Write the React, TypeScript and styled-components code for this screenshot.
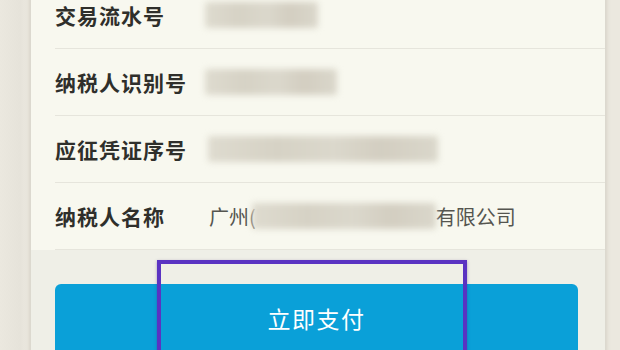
import styled, { createGlobalStyle } from 'styled-components'

const GlobalStyle = createGlobalStyle`
  html, body {
    margin: 0;
    padding: 0;
    background: #ebe8df;
    overflow: hidden;
  }
  body {
    font-family: "Noto Sans CJK SC", "Noto Sans", sans-serif;
  }
`

type Info = {
  label: string
  prefix?: string
  blurWidth: number
  blurOffset?: number
  suffix?: string
}

const rows: Info[] = [
  { label: '交易流水号', blurWidth: 113 },
  { label: '纳税人识别号', blurWidth: 132 },
  { label: '应征凭证序号', blurWidth: 230, blurOffset: 3 },
  { label: '纳税人名称', prefix: '广州(', blurWidth: 184, blurOffset: -4, suffix: '有限公司' },
]

const App = () => {
  return (
    <Root>
      <GlobalStyle />
      <Page>
        <Card>
          {rows.map((r) => (
            <Row key={r.label}>
              <Label>{r.label}</Label>
              <Value>
                {r.prefix && <Plain lead>{r.prefix}</Plain>}
                <Blurred w={r.blurWidth} offset={r.blurOffset || 0} />
                {r.suffix && <Plain>{r.suffix}</Plain>}
              </Value>
            </Row>
          ))}
          <Footer>
            <PayBtn>立即支付</PayBtn>
            <Highlight />
            <Watermark />
          </Footer>
        </Card>
      </Page>
    </Root>
  )
}

export default App

const Root = styled.div`
  width: 620px;
  height: 350px;
  overflow: hidden;
  background: linear-gradient(90deg, #ebe8df 0, #e6e3da 20px, #ebe8df 28px);
`

const Page = styled.div`
  padding: 0 14px 0 30px;
`

const Card = styled.div`
  margin-top: -18px;
  background: #f8f8ef;
  border-left: 1px solid #dcd9cf;
  border-right: 1px solid #dcd9cf;
  box-shadow: 0 0 4px rgba(120, 110, 90, 0.25);
`

const Row = styled.div`
  display: flex;
  align-items: center;
  height: 66px;
  margin-left: 24px;
  border-bottom: 1px solid #e6e5dc;
`

const Label = styled.div`
  width: 150px;
  flex-shrink: 0;
  font-size: 21px;
  font-weight: bold;
  letter-spacing: 1px;
  color: #2f2f2b;
`

const Value = styled.div`
  display: flex;
  align-items: center;
  font-size: 20px;
  color: #55554f;
`

const Plain = styled.span<{ lead?: boolean }>`
  white-space: nowrap;
  margin-left: ${({ lead }) => (lead ? '4px' : '0')};
`

const Blurred = styled.span<{ w: number; offset: number }>`
  display: inline-block;
  width: ${({ w }) => w}px;
  height: 26px;
  margin-left: ${({ offset }) => offset}px;
  background: linear-gradient(
    90deg,
    #dedbcf 0%,
    #d6d2c5 30%,
    #dbd8cc 55%,
    #d3cec1 75%,
    #dad7cb 100%
  );
  filter: blur(3px);
  border-radius: 3px;
`

const Footer = styled.div`
  position: relative;
  background: #efefe7;
  height: 101px;
  padding: 34px 27px 0 24px;
`

const PayBtn = styled.div`
  height: 72px;
  border-radius: 6px;
  background: #0aa0d8;
  color: #ffffff;
  font-size: 23px;
  letter-spacing: 1.5px;
  display: flex;
  justify-content: center;
  padding-top: 17px;
  box-sizing: border-box;
`

const Highlight = styled.div`
  position: absolute;
  left: 126px;
  top: 10px;
  width: 302px;
  height: 110px;
  border: 4px solid #5a33c2;
  box-shadow: 0 1px 3px rgba(60, 30, 120, 0.4);
`

const Watermark = styled.div`
  position: absolute;
  right: 40px;
  bottom: 0;
  width: 0;
  height: 0;
  border-left: 22px solid transparent;
  border-bottom: 26px solid rgba(255, 255, 255, 0.18);
`
